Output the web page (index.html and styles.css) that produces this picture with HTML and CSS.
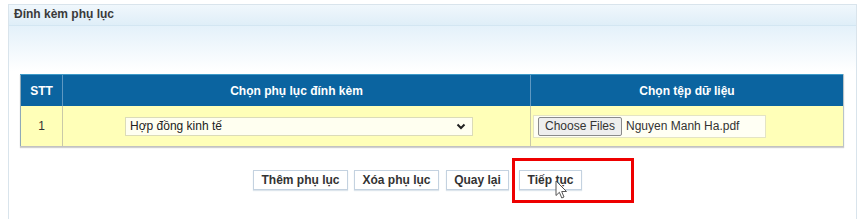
FILE: index.html
```html
<!DOCTYPE html>
<html lang="vi">
<head>
    <meta charset="UTF-8">
    <meta name="viewport" content="width=device-width, initial-scale=1.0">
    <title>Đính kèm phụ lục</title>
    <link rel="stylesheet" href="styles.css">
</head>
<body>
    <!-- panel -->
    <div class="panel">
        <div class="panel-title">Đính kèm phụ lục</div>
        <div class="panel-body">
            <table class="grid">
                <colgroup>
                    <col class="col-stt">
                    <col class="col-type">
                    <col class="col-file">
                </colgroup>
                <tr>
                    <th>STT</th>
                    <th>Chọn phụ lục đính kèm</th>
                    <th>Chọn tệp dữ liệu</th>
                </tr>
                <tr>
                    <td class="cell-stt">1</td>
                    <td class="cell-type">
                        <div class="select-box">
                            <span>Hợp đồng kinh tế</span>
                            <svg width="10" height="7" viewBox="0 0 10 7"><path d="M1.5 1.5 L5 5 L8.5 1.5" fill="none" stroke="#222" stroke-width="2"/></svg>
                        </div>
                    </td>
                    <td class="cell-file">
                        <div class="file-box">
                            <button class="file-btn" type="button">Choose Files</button>
                            <span class="file-name">Nguyen Manh Ha.pdf</span>
                        </div>
                    </td>
                </tr>
            </table>

            <!-- actions -->
            <div class="actions">
                <button class="btn btn-add" type="button">Thêm phụ lục</button>
                <button class="btn btn-del" type="button">Xóa phụ lục</button>
                <button class="btn btn-back" type="button">Quay lại</button>
                <span class="btn-wrap">
                    <button class="btn btn-next" type="button">Tiếp tục</button>
                    <span class="highlight"></span>
                    <svg class="cursor" width="13" height="20" viewBox="0 0 13 20"><path d="M1 1 L1 15.5 L4.4 12.3 L6.8 18 L9 17 L6.7 11.5 L11.5 11.5 Z" fill="#fff" stroke="#555" stroke-width="1" stroke-linejoin="round"/></svg>
                </span>
            </div>
        </div>
    </div>
</body>
</html>
```

FILE: styles.css
```css
/* page styles */

body {
    margin: 0;
    padding: 4px 3px 0 8px;
    background-color: #ffffff;
    font-family: 'Liberation Sans', Arial, sans-serif;
    font-size: 12px;
    color: #333;
}
.panel {
    border: 1px solid #d9e4ec;
    border-bottom: none;
    height: 215px;
    box-sizing: border-box;
}
.panel-title {
    height: 20px;
    line-height: 19px;
    padding: 0 0 0 5px;
    font-weight: bold;
    color: #3a3a3a;
    background: linear-gradient(#f0f7fc, #dfeef8);
    border-bottom: 1px solid #d3e6f2;
}
.panel-body {
    padding: 48px 13px 0 11px;
    background: linear-gradient(#e4f1fa 0px, #ffffff 45px);
}

/* grid */
table.grid {
    width: 823px;
    table-layout: fixed;
    border-collapse: collapse;
    box-shadow: 0 1px 1px #d0d0d0;
}
col.col-stt {
    width: 42px;
}
col.col-type {
    width: 468px;
}
col.col-file {
    width: 313px;
}
table.grid th {
    height: 31px;
    padding: 0;
    background-color: #0b64a0;
    color: #ffffff;
    font-weight: bold;
    text-align: center;
    border-top: 1px solid #3e9ac8;
    border-left: 1px solid #5f98c2;
}
table.grid td {
    height: 40px;
    padding: 0;
    background-color: #ffffb8;
    border-left: 1px solid #c9c9a8;
    border-bottom: 1px solid #c2c2c2;
}
table.grid th:first-child,
table.grid td:first-child {
    border-left: 1px solid #8fa9b8;
}
table.grid th:last-child,
table.grid td:last-child {
    border-right: 1px solid #b9c4c9;
}
table.grid td.cell-stt {
    text-align: center;
}
table.grid td.cell-type {
    padding-left: 62px;
}
table.grid td.cell-file {
    padding-left: 2px;
}

.select-box {
    width: 336px;
    height: 17px;
    padding: 0 6px 0 4px;
    display: flex;
    align-items: center;
    justify-content: space-between;
    border: 1px solid #dcdcb8;
    background-color: #fffff0;
    color: #222;
}
.file-box {
    width: 231px;
    height: 21px;
    display: flex;
    align-items: center;
    gap: 4px;
    border: 1px solid #e4e4c4;
    background-color: #fffff4;
}
.file-btn {
    margin: 0 0 0 4px;
    height: 19px;
    padding: 0 6px;
    font-family: 'Liberation Sans', Arial, sans-serif;
    font-size: 12px;
    color: #333;
    background-color: #eeeeee;
    border: 1px solid #8a8a8a;
    border-radius: 2px;
}
.file-name {
    color: #333;
}

/* actions */
.actions {
    display: flex;
    gap: 6px;
    margin: 23px 0 0 0;
    padding: 0 0 0 233px;
}
.btn {
    height: 20px;
    padding: 0;
    font-family: 'Liberation Sans', Arial, sans-serif;
    font-size: 12px;
    font-weight: bold;
    color: #333;
    background-color: #ffffff;
    border: 1px solid #c4d2e0;
    box-shadow: 0 1px 1px #dde5ec;
}
.btn-add {
    width: 95px;
}
.btn-del {
    width: 85px;
}
.btn-back {
    width: 63px;
    margin-left: 1px;
}
.btn-wrap {
    position: relative;
    margin-left: 4px;
    display: flex;
}
.btn-next {
    width: 63px;
}
.highlight {
    position: absolute;
    left: -7px;
    top: -12px;
    width: 116px;
    height: 39px;
    border: 3px solid #ee0000;
}
.cursor {
    position: absolute;
    left: 36px;
    top: 10px;
}
```
